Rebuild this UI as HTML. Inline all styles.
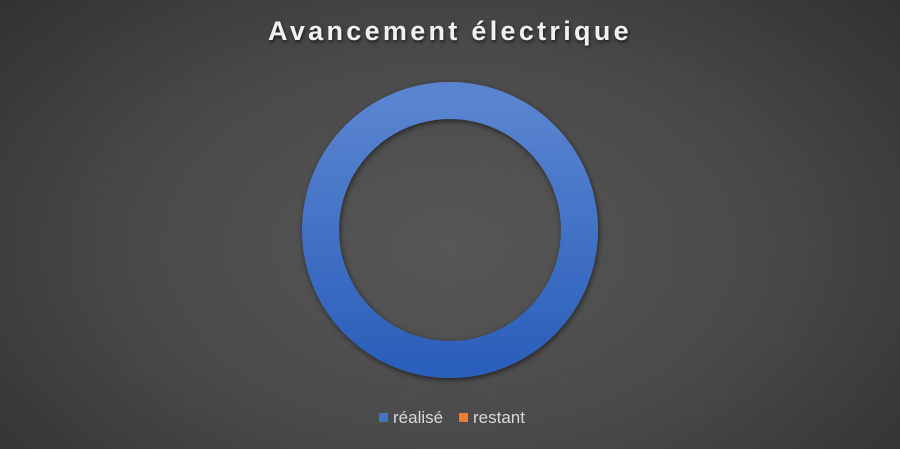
<!DOCTYPE html>
<html><head><meta charset="utf-8"><style>
html,body{margin:0;padding:0}
body{width:900px;height:449px;overflow:hidden;position:relative;
background:radial-gradient(ellipse 75% 95% at 50% 55%,#575757 0%,#4a4a4a 45%,#2b2b2b 100%);
font-family:"Liberation Sans",sans-serif}
.t{position:absolute;left:0;width:900px;top:16px;text-align:center;color:#f2f2f2;font-size:27px;font-weight:bold;letter-spacing:3.3px;text-shadow:1px 2px 3px rgba(0,0,0,.6)}
.lg{position:absolute;top:408px;font-size:17px;color:#d9d9d9}
.sq{position:absolute;top:413px;width:9px;height:9px}
</style></head><body>
<div class="t">Avancement électrique</div>
<svg width="900" height="449" style="position:absolute;left:0;top:0">
<defs>
<linearGradient id="g" x1="0" y1="0" x2="0" y2="1">
<stop offset="0" stop-color="#5a84d0"/><stop offset="1" stop-color="#2c60bb"/></linearGradient>
<filter id="s" x="-20%" y="-20%" width="140%" height="140%"><feDropShadow dx="1" dy="2" stdDeviation="3" flood-color="#000" flood-opacity=".55"/></filter>
</defs>
<circle cx="450" cy="230" r="129.5" fill="none" stroke="url(#g)" stroke-width="37" filter="url(#s)"/>
</svg>
<div class="sq" style="left:379px;background:#4472c4"></div>
<div class="lg" style="left:393px">réalisé</div>
<div class="sq" style="left:459px;background:#ed7d31"></div>
<div class="lg" style="left:473px">restant</div>
</body></html>
